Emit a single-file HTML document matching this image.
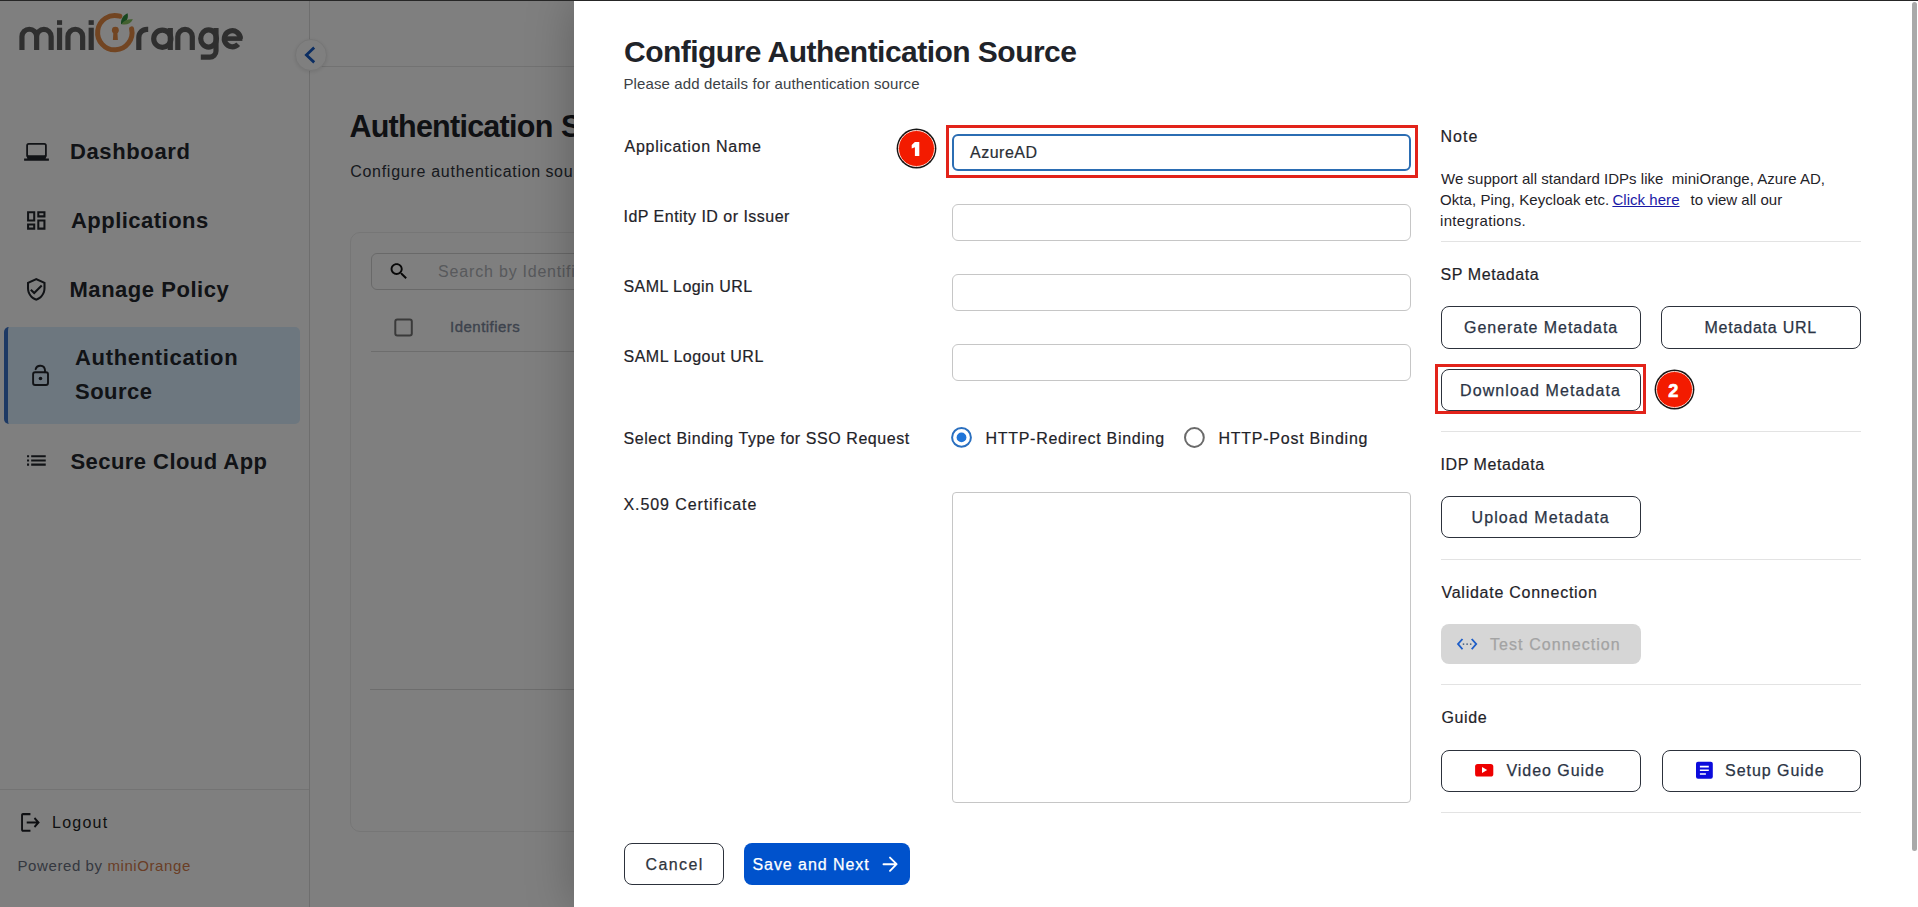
<!DOCTYPE html>
<html><head><meta charset="utf-8"><title>Configure Authentication Source</title>
<style>
html,body{margin:0;padding:0;width:1918px;height:907px;overflow:hidden;background:#fff}
body{position:relative;font-family:"Liberation Sans",sans-serif}
.tx{position:absolute;font-family:"Liberation Sans",sans-serif;line-height:1;white-space:nowrap}
.abs{position:absolute;box-sizing:border-box}
#under{position:absolute;left:0;top:0;width:1918px;height:907px;background:#fff;overflow:hidden}
#overlay{position:absolute;left:0;top:0;width:1918px;height:907px;background:rgba(0,0,0,0.5)}
#drawer{position:absolute;left:574px;top:0;width:1344px;height:907px;background:#fff;box-shadow:0 0 44px rgba(0,0,0,0.26)}
#layer{position:absolute;left:0;top:0;width:1918px;height:907px}
.inp{position:absolute;box-sizing:border-box;border:1px solid #c6c6c6;border-radius:6px;background:#fff}
.btn{position:absolute;box-sizing:border-box;border:1px solid #2c313b;border-radius:8px;background:#fff}
.hr{position:absolute;left:1441px;width:420px;height:1px;background:#e3e3e3}
.redbox{position:absolute;box-sizing:border-box;border:3px solid #e2231a}
.badge{position:absolute;box-sizing:border-box;width:37px;height:37px;border-radius:50%;background:#f31b00;border:1px solid #ffd9d0;box-shadow:0 0 0 1.4px #161616}
</style></head>
<body>
<div id="under">
  <!-- sidebar -->
  <div class="abs" style="left:309px;top:0;width:1px;height:907px;background:#dcdcdc"></div>
  <div class="abs" style="left:0;top:789px;width:309px;height:1px;background:#e6e6e6"></div>
  <!-- active nav -->
  <div class="abs" style="left:4px;top:327px;width:296px;height:97px;background:#dbeeff;border-radius:5px;border-left:4px solid #3a73c8"></div>
  <!-- topbar line -->
  <div class="abs" style="left:310px;top:66px;width:1608px;height:1px;background:#e4e4e4"></div>
  <!-- card -->
  <div class="abs" style="left:350px;top:232px;width:900px;height:600px;border:1px solid #ececec;border-radius:10px"></div>
  <div class="abs" style="left:371px;top:253px;width:800px;height:37px;border:1px solid #d2d2d2;border-radius:6px"></div>
  <div class="abs" style="left:371px;top:351px;width:800px;height:1px;background:#dadada"></div>
  <div class="abs" style="left:370px;top:689px;width:800px;height:1px;background:#dadada"></div>
  <!-- collapse btn -->
  <div class="abs" style="left:294.5px;top:38.6px;width:32px;height:32px;border-radius:50%;background:#fff;border:1px solid #ececec;box-shadow:0 1px 4px rgba(0,0,0,0.10)"></div>
  <svg id="layer" width="1918" height="907" viewBox="0 0 1918 907">
    <!-- collapse chevron -->
    <path d="M313.2 48.6 L306.4 55 L313.2 61.4" fill="none" stroke="#175bc4" stroke-width="2.8" stroke-linecap="square"/>
    <!-- logo -->
    <g fill="none" stroke="#5f5f5f" stroke-width="5.2">
      <path d="M21.95 50 V36.6 A7.35 7.35 0 0 1 36.65 36.6 V50 M36.65 36.6 A7.25 7.25 0 0 1 51.15 36.6 V50"/>
      <path d="M59.55 50 V27.7"/>
      <path d="M67.95 50 V36.6 A7.35 7.35 0 0 1 82.65 36.6 V50"/>
      <path d="M91.2 50 V27.7"/>
      <path d="M138.8 50 V37.4 A8.1 8.1 0 0 1 146.9 29.3 H148.2"/>
      <circle cx="162.3" cy="38.7" r="8.6"/>
      <path d="M170.3 28 V50"/>
      <path d="M177.8 50 V36.6 A7.25 7.25 0 0 1 192.3 36.6 V50"/>
      <ellipse cx="208.6" cy="38.5" rx="7.9" ry="8.6"/>
      <path d="M216 28 V51 A6.2 6.2 0 0 1 209.8 57.2 H200.8"/>
      <path d="M240.4 38.7 A8.05 8.05 0 1 0 238.2 44.3"/>
    </g>
    <path d="M222.3 38.6 H242.4" stroke="#5f5f5f" stroke-width="4.6"/>
    <rect x="57" y="20.2" width="5.1" height="4.7" fill="#5f5f5f"/>
    <rect x="88.6" y="20.2" width="5.2" height="4.7" fill="#5f5f5f"/>
    <path d="M131.6 28.9 A17.2 17.2 0 1 1 119.8 16.2" fill="none" stroke="#e58a45" stroke-width="5" stroke-linecap="round"/>
    <circle cx="115.35" cy="30.3" r="3.45" fill="#e58a45"/>
    <path d="M113.4 31.5 L117.3 31.5 L117.9 39.9 L112.9 39.9 Z" fill="#e58a45"/>
    <path d="M121 24.3 C120.5 19 123.5 15 127.6 13.3 C128.8 18.5 126.5 22.5 121 24.3 Z" fill="#2f8f3e"/>
    <path d="M121.5 24.2 C123.5 20.5 128 18.8 132.9 19.3 C131 23.5 126.5 25.5 121.5 24.2 Z" fill="#86c25e"/>
    <!-- nav icons -->
    <rect x="27.1" y="143.9" width="18.8" height="12.4" rx="1.6" fill="none" stroke="#23262d" stroke-width="1.8"/><path d="M26.2 155.4 H46.8 L45.6 158.6 H48.9 V160.7 H24.1 V158.6 H27.4 Z" fill="#23262d"/>
    <path transform="translate(24 208.2) scale(1.022)" fill="#23262d" d="M19 5v2h-4V5h4M9 5v6H5V5h4m10 8v6h-4v-6h4M9 17v2H5v-2h4M21 3h-8v6h8V3zM11 3H3v10h8V3zm10 8h-8v10h8V11zm-10 4H3v6h8v-6z"/>
    <path transform="translate(23.9 277) scale(1.03)" fill="#23262d" d="M12 1L3 5v6c0 5.55 3.84 10.74 9 12 5.16-1.26 9-6.45 9-12V5l-9-4zm7 10c0 4.52-2.98 8.69-7 9.93-4.02-1.24-7-5.41-7-9.93V6.3l7-3.11 7 3.11V11zm-11.59.59L6 13l4 4 8-8-1.41-1.42L10 14.17z"/>
    <g fill="none" stroke="#23262d" stroke-width="1.9">
      <rect x="33.1" y="372.2" width="14.9" height="12.8" rx="2"/>
      <path d="M35.6 369.2 A4.8 4.8 0 0 1 45 370.2 V372.2" stroke-linecap="round"/>
    </g>
    <circle cx="40.5" cy="378.5" r="1.8" fill="#23262d"/>
    <path transform="translate(23.9 448) scale(1.04)" fill="#23262d" d="M3 13h2v-2H3v2zm0 4h2v-2H3v2zm0-8h2V7H3v2zm4 4h14v-2H7v2zm0 4h14v-2H7v2zM7 7v2h14V7H7z"/>
    <!-- logout icon -->
    <path transform="translate(21.1 813.1) scale(0.935 1.04) translate(-2 -3)" fill="#1d1f24" d="M17 7l-1.41 1.41L18.17 11H8v2h10.17l-2.58 2.58L17 17l5-5zM4 5h8V3H4c-1.1 0-2 .9-2 2v14c0 1.1.9 2 2 2h8v-2H4V5z"/>
    <!-- search icon -->
    <path transform="translate(390.6 263.2) scale(0.93 0.9) translate(-3 -3)" fill="#111" d="M15.5 14h-.79l-.28-.27C15.41 12.59 16 11.11 16 9.5 16 5.910 13.09 3 9.5 3S3 5.91 3 9.5 5.91 16 9.5 16c1.61 0 3.09-.59 4.23-1.57l.27.28v.79l5 4.99L20.490 19l-4.99-5zm-6 0C7.01 14 5 11.99 5 9.5S7.01 5 9.5 5 14 7.01 14 9.5 11.99 14 9.5 14z"/>
    <!-- checkbox -->
    <rect x="395.3" y="319.4" width="16.5" height="16.2" rx="2" fill="none" stroke="#757575" stroke-width="2"/>
  </svg>
<div id="nav1" class="tx" style="left:70.00px;top:141.07px;font-size:22px;font-weight:700;color:#23262d;letter-spacing:0.625px;">Dashboard</div>
<div id="nav2" class="tx" style="left:71.00px;top:209.67px;font-size:22px;font-weight:700;color:#23262d;letter-spacing:0.473px;">Applications</div>
<div id="nav3" class="tx" style="left:69.50px;top:278.97px;font-size:22px;font-weight:700;color:#23262d;letter-spacing:0.534px;">Manage Policy</div>
<div id="nav4a" class="tx" style="left:75.00px;top:347.37px;font-size:22px;font-weight:700;color:#23262d;letter-spacing:0.662px;">Authentication</div>
<div id="nav4b" class="tx" style="left:75.00px;top:381.47px;font-size:22px;font-weight:700;color:#23262d;letter-spacing:0.480px;">Source</div>
<div id="nav5" class="tx" style="left:70.50px;top:450.57px;font-size:22px;font-weight:700;color:#23262d;letter-spacing:0.439px;">Secure Cloud App</div>
<div id="logout" class="tx" style="left:52.00px;top:815.37px;font-size:16px;font-weight:400;color:#1d1f24;letter-spacing:1.240px;">Logout</div>
<div id="powered" class="tx" style="left:17.50px;top:858.30px;font-size:15px;font-weight:400;color:#6a707e;letter-spacing:0.590px;">Powered by <span style="color:#d47c4c">miniOrange</span></div>
<div id="mtitle" class="tx" style="left:349.40px;top:110.98px;font-size:30.5px;font-weight:700;color:#1f2329;letter-spacing:-0.739px;">Authentication</div>
<div id="mtitle2" class="tx" style="left:561.00px;top:110.98px;font-size:30.5px;font-weight:700;color:#1f2329;letter-spacing:-0.739px;">Sources</div>
<div id="msub" class="tx" style="left:350.20px;top:163.62px;font-size:16px;font-weight:400;color:#2f343c;letter-spacing:0.722px;">Configure authentication</div>
<div id="msub2" class="tx" style="left:545.40px;top:163.62px;font-size:16px;font-weight:400;color:#2f343c;letter-spacing:0.731px;">sources for your users</div>
<div id="msearch" class="tx" style="left:438.10px;top:264.05px;font-size:16px;font-weight:400;color:#b0b3b8;letter-spacing:0.827px;">Search by</div>
<div id="msearch2" class="tx" style="left:522.60px;top:264.05px;font-size:16px;font-weight:400;color:#b0b3b8;letter-spacing:0.726px;">Identifiers</div>
<div id="mident" class="tx" style="left:450.10px;top:318.61px;font-size:15px;font-weight:400;color:#7a869a;letter-spacing:0.460px;-webkit-text-stroke:0.35px currentColor">Identifiers</div>
</div>
<div id="overlay"></div>
<div id="drawer"></div>
<div id="over" style="position:absolute;left:0;top:0;width:1918px;height:907px">
  <!-- inputs -->
  <div class="inp" style="left:952px;top:134px;width:459px;height:37px;border:2px solid #2b6db3"></div>
  <div class="inp" style="left:952px;top:204px;width:459px;height:37px"></div>
  <div class="inp" style="left:952px;top:274px;width:459px;height:37px"></div>
  <div class="inp" style="left:952px;top:344px;width:459px;height:37px"></div>
  <div class="inp" style="left:952px;top:492px;width:459px;height:311px;border-radius:4px"></div>
  <!-- hrs -->
  <div class="hr" style="top:241px"></div>
  <div class="hr" style="top:431px"></div>
  <div class="hr" style="top:559px"></div>
  <div class="hr" style="top:684px"></div>
  <div class="hr" style="top:812px"></div>
  <!-- buttons -->
  <div class="btn" style="left:1441px;top:306px;width:200px;height:43px"></div>
  <div class="btn" style="left:1661px;top:306px;width:200px;height:43px"></div>
  <div class="btn" style="left:1441px;top:369px;width:200px;height:42px"></div>
  <div class="btn" style="left:1441px;top:496px;width:200px;height:42px"></div>
  <div class="btn" style="left:1441px;top:624px;width:200px;height:40px;border:none;background:#d6d6d6"></div>
  <div class="btn" style="left:1441px;top:749.6px;width:200px;height:42px"></div>
  <div class="btn" style="left:1661.5px;top:749.6px;width:199.5px;height:42px"></div>
  <div class="btn" style="left:624px;top:843px;width:100px;height:42px"></div>
  <div class="btn" style="left:744px;top:843px;width:166px;height:42px;border:none;background:#0052cc"></div>
  <svg id="layer2" style="position:absolute;left:0;top:0" width="1918" height="907" viewBox="0 0 1918 907">
    <!-- radios -->
    <circle cx="961.5" cy="437.4" r="9.4" fill="none" stroke="#2a6fbf" stroke-width="2"/>
    <circle cx="961.5" cy="437.4" r="4.9" fill="#1f74d8"/>
    <circle cx="1194.4" cy="437.5" r="9.4" fill="none" stroke="#6a6a6a" stroke-width="2"/>
    <!-- test connection icon -->
    <path transform="translate(1456.8 638.4) scale(0.922 0.877) translate(-0.82 -5.48)" fill="#1e5ec8" d="M7.77 6.76L6.23 5.48.82 12l5.41 6.52 1.54-1.28L3.42 12l4.35-5.24zm9.99-1.28l-1.54 1.28L20.58 12l-4.350 5.24 1.54 1.28L23.18 12l-5.41-6.52z"/><path transform="translate(1456.8 638.4) scale(0.922 0.877) translate(-0.82 -5.48)" fill="#27466f" d="M7.3 12.8h1.6v-1.6H7.3zm3.9 0h1.6v-1.6h-1.6zm3.9 0h1.6v-1.6h-1.6z"/>
    <!-- youtube -->
    <rect x="1475.1" y="763.9" width="18.2" height="12.6" rx="2.6" fill="#ee0000"/>
    <path d="M1482 767 L1487.2 770 L1482 773 Z" fill="#fff"/>
    <!-- doc -->
    <rect x="1696" y="761.8" width="16.8" height="16.9" rx="2" fill="#0b0bdc"/>
    <g stroke="#fff" stroke-width="1.6">
      <path d="M1699.9 766.6 H1708.8 M1699.9 770.2 H1708.8 M1699.9 774 H1705.9"/>
    </g>
    <!-- arrow -->
    <path d="M883.5 864.2 H896.5 M890 857.6 L896.6 864.2 L890 870.8" fill="none" stroke="#fff" stroke-width="1.9" stroke-linecap="round" stroke-linejoin="round"/>
  </svg>
  <!-- annotations -->
  <div class="redbox" style="left:946px;top:125px;width:472px;height:53px"></div>
  <div class="redbox" style="left:1435px;top:364px;width:211px;height:50px"></div>
  <div class="badge" style="left:897.5px;top:130.3px"></div>
  <div class="badge" style="left:1655.5px;top:371.2px"></div>
  <svg style="position:absolute;left:0;top:0" width="1918" height="907" viewBox="0 0 1918 907"><path d="M914.9 141.9 H919.3 V156.1 H914.9 V147.3 L911.7 148.6 V145.1 Z" fill="#fff"/></svg>
<div id="dtitle" class="tx" style="left:624.00px;top:36.70px;font-size:30px;font-weight:700;color:#1f2329;letter-spacing:-0.533px;">Configure Authentication Source</div>
<div id="dsub" class="tx" style="left:623.50px;top:75.50px;font-size:15px;font-weight:400;color:#3b3f45;letter-spacing:0.116px;">Please add details for authentication source</div>
<div id="l1" class="tx" style="left:624.50px;top:138.95px;font-size:16px;font-weight:400;color:#1f2329;letter-spacing:0.733px;-webkit-text-stroke:0.2px currentColor">Application Name</div>
<div id="l2" class="tx" style="left:623.50px;top:209.03px;font-size:16px;font-weight:400;color:#1f2329;letter-spacing:0.482px;-webkit-text-stroke:0.2px currentColor">IdP Entity ID or Issuer</div>
<div id="l3" class="tx" style="left:623.50px;top:278.83px;font-size:16px;font-weight:400;color:#1f2329;letter-spacing:0.431px;-webkit-text-stroke:0.2px currentColor">SAML Login URL</div>
<div id="l4" class="tx" style="left:623.50px;top:349.03px;font-size:16px;font-weight:400;color:#1f2329;letter-spacing:0.500px;-webkit-text-stroke:0.2px currentColor">SAML Logout URL</div>
<div id="l5" class="tx" style="left:623.50px;top:430.93px;font-size:16px;font-weight:400;color:#1f2329;letter-spacing:0.566px;-webkit-text-stroke:0.2px currentColor">Select Binding Type for SSO Request</div>
<div id="l6" class="tx" style="left:623.50px;top:497.10px;font-size:16px;font-weight:400;color:#1f2329;letter-spacing:0.912px;-webkit-text-stroke:0.2px currentColor">X.509 Certificate</div>
<div id="azure" class="tx" style="left:970.00px;top:144.95px;font-size:16px;font-weight:400;color:#2a2e35;letter-spacing:0.500px;-webkit-text-stroke:0.2px currentColor">AzureAD</div>
<div id="r1" class="tx" style="left:985.50px;top:431.38px;font-size:16px;font-weight:400;color:#1f2329;letter-spacing:0.710px;-webkit-text-stroke:0.2px currentColor">HTTP-Redirect Binding</div>
<div id="r2" class="tx" style="left:1218.50px;top:431.38px;font-size:16px;font-weight:400;color:#1f2329;letter-spacing:0.750px;-webkit-text-stroke:0.2px currentColor">HTTP-Post Binding</div>
<div id="note" class="tx" style="left:1440.50px;top:128.74px;font-size:16px;font-weight:400;color:#1f2329;letter-spacing:1.067px;-webkit-text-stroke:0.2px currentColor">Note</div>
<div id="n1" class="tx" style="left:1441.00px;top:170.62px;font-size:15px;font-weight:400;color:#1f2329;letter-spacing:0.029px;">We support all standard IDPs like&nbsp; miniOrange, Azure AD,</div>
<div id="n2a" class="tx" style="left:1440.00px;top:191.72px;font-size:15px;font-weight:400;color:#1f2329;letter-spacing:0.067px;">Okta, Ping, Keycloak etc.</div>
<div id="n2b" class="tx" style="left:1612.40px;top:191.72px;font-size:15px;font-weight:400;color:#1a1aa6;letter-spacing:0.044px;"><u>Click here</u></div>
<div id="n2c" class="tx" style="left:1690.50px;top:191.72px;font-size:15px;font-weight:400;color:#1f2329;letter-spacing:0.000px;">to view all our</div>
<div id="n3" class="tx" style="left:1440.00px;top:212.52px;font-size:15px;font-weight:400;color:#1f2329;letter-spacing:0.333px;">integrations.</div>
<div id="sp" class="tx" style="left:1440.50px;top:266.63px;font-size:16px;font-weight:400;color:#1f2329;letter-spacing:0.600px;-webkit-text-stroke:0.2px currentColor">SP Metadata</div>
<div id="b1" class="tx" style="left:1464.00px;top:319.94px;font-size:16px;font-weight:400;color:#2b3445;letter-spacing:0.962px;-webkit-text-stroke:0.25px currentColor">Generate Metadata</div>
<div id="b2" class="tx" style="left:1704.50px;top:319.94px;font-size:16px;font-weight:400;color:#2b3445;letter-spacing:0.782px;-webkit-text-stroke:0.25px currentColor">Metadata URL</div>
<div id="b3" class="tx" style="left:1460.00px;top:383.05px;font-size:16px;font-weight:400;color:#2b3445;letter-spacing:1.098px;-webkit-text-stroke:0.25px currentColor">Download Metadata</div>
<div id="idp" class="tx" style="left:1440.50px;top:456.95px;font-size:16px;font-weight:400;color:#1f2329;letter-spacing:0.563px;-webkit-text-stroke:0.2px currentColor">IDP Metadata</div>
<div id="b4" class="tx" style="left:1471.50px;top:510.07px;font-size:16px;font-weight:400;color:#2b3445;letter-spacing:1.101px;-webkit-text-stroke:0.25px currentColor">Upload Metadata</div>
<div id="val" class="tx" style="left:1441.50px;top:585.18px;font-size:16px;font-weight:400;color:#1f2329;letter-spacing:0.744px;-webkit-text-stroke:0.2px currentColor">Validate Connection</div>
<div id="b5" class="tx" style="left:1490.00px;top:636.65px;font-size:16px;font-weight:400;color:#a3a3a3;letter-spacing:1.071px;-webkit-text-stroke:0.25px currentColor">Test Connection</div>
<div id="guide" class="tx" style="left:1441.50px;top:710.35px;font-size:16px;font-weight:400;color:#1f2329;letter-spacing:0.600px;-webkit-text-stroke:0.2px currentColor">Guide</div>
<div id="b6" class="tx" style="left:1506.50px;top:762.88px;font-size:16px;font-weight:400;color:#2b3445;letter-spacing:0.960px;-webkit-text-stroke:0.25px currentColor">Video Guide</div>
<div id="b7" class="tx" style="left:1725.00px;top:762.88px;font-size:16px;font-weight:400;color:#2b3445;letter-spacing:0.960px;-webkit-text-stroke:0.25px currentColor">Setup Guide</div>
<div id="cancel" class="tx" style="left:645.50px;top:856.63px;font-size:16px;font-weight:400;color:#2f343c;letter-spacing:1.400px;-webkit-text-stroke:0.25px currentColor">Cancel</div>
<div id="save" class="tx" style="left:752.50px;top:856.63px;font-size:16px;font-weight:400;color:#ffffff;letter-spacing:0.934px;-webkit-text-stroke:0.25px currentColor">Save and Next</div>
<div id="c2" class="tx" style="left:1668.20px;top:381.76px;font-size:18px;font-weight:700;color:#ffffff;letter-spacing:0.000px;-webkit-text-stroke:0.7px #fff">2</div>
</div>
<!-- top line -->
<div class="abs" style="left:0;top:0;width:1918px;height:1px;background:#262626"></div>
<!-- scrollbar -->
<div class="abs" style="left:1912px;top:2px;width:5px;height:849px;border-radius:3px;background:#a9a9a9"></div>
</body></html>
